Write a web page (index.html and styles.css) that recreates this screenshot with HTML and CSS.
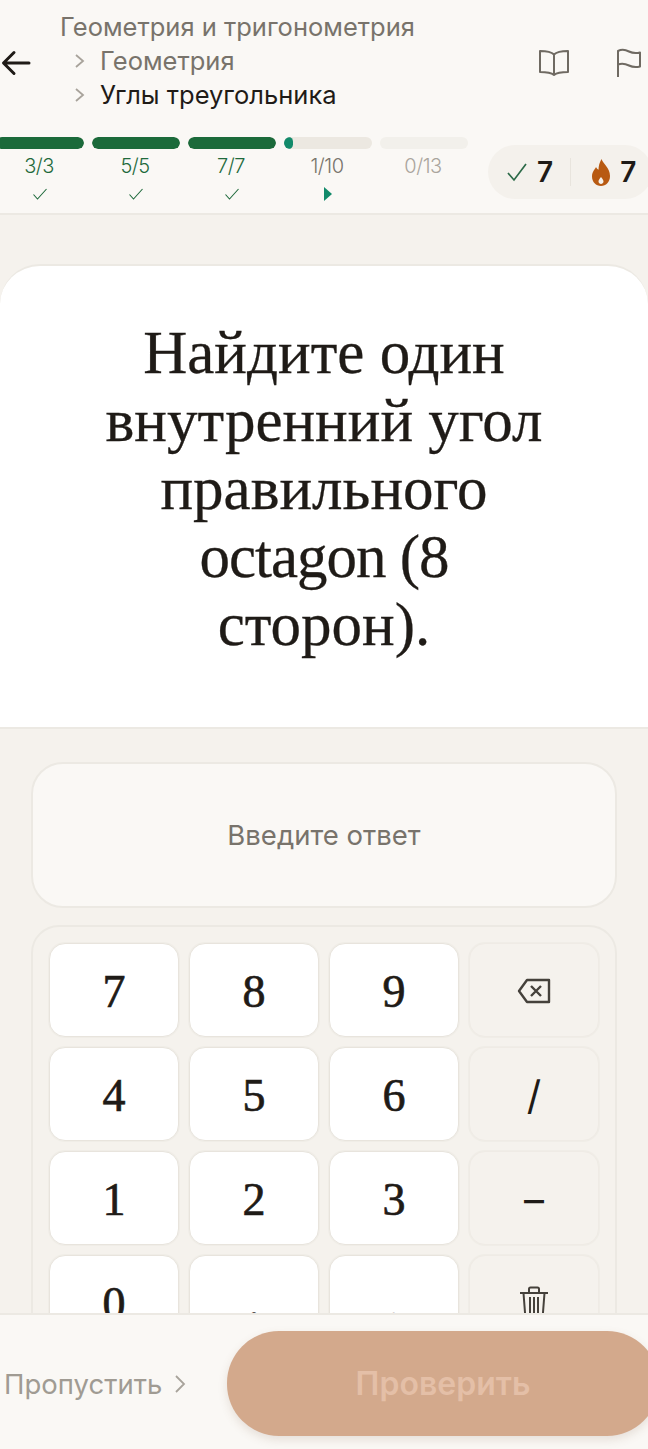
FILE: index.html
```html
<!DOCTYPE html>
<html lang="ru">
<head>
    <meta charset="UTF-8">
    <title>Углы треугольника</title>
    <link rel="stylesheet" href="styles.css">
</head>
<body>
    <div class="screen">
        <header class="top">
            <div class="crumbs-row">
                <svg class="back" viewBox="0 0 30 26" width="30" height="26"><path d="M28 13H3M13 2.500L2.500 13 13 23.500" fill="none" stroke="#1f1b17" stroke-width="3" stroke-linecap="round" stroke-linejoin="round"/></svg>
                <div class="crumbs">
                    <div class="crumb-top">Геометрия и тригонометрия</div>
                    <div class="crumb"><span class="chev"><svg viewBox="0 0 12 16" width="12" height="16"><path d="M2 2l7 6-7 6" fill="none" stroke="#a8a39b" stroke-width="1.800"/></svg></span>Геометрия</div>
                    <div class="crumb current"><span class="chev"><svg viewBox="0 0 12 16" width="12" height="16"><path d="M2 2l7 6-7 6" fill="none" stroke="#a8a39b" stroke-width="1.800"/></svg></span>Углы треугольника</div>
                </div>
                <svg class="book" viewBox="0 0 32 28" width="32" height="28"><path d="M16 5.500C13 2.500 8 2 2 2v21c6 0 11 .5 14 3 3-2.500 8-3 14-3V2c-6 0-11 .5-14 3.500zM16 5.500V26" fill="none" stroke="#6f6a62" stroke-width="2" stroke-linejoin="round"/></svg>
                <svg class="flag" viewBox="0 0 26 30" width="26" height="30"><path d="M2 29V3c4-2 8-1 11 .5s7 2 11 1v14c-4 1-8 .5-11-1s-7-2.500-11-1" fill="none" stroke="#6f6a62" stroke-width="2" stroke-linejoin="round"/></svg>
            </div>
            <div class="progress-row">
                <div class="levels">
                    <div class="level first">
                        <div class="bar"><div class="fill" style="width:100%"></div></div>
                        <div class="count">3/3</div>
                        <svg class="tick" viewBox="0 0 16 14" width="16" height="14"><path d="M1.500 7.500l4 4.500L14.500 2" fill="none" stroke="#1f6a3c" stroke-width="1.100"/></svg>
                    </div>
                    <div class="level">
                        <div class="bar"><div class="fill" style="width:100%"></div></div>
                        <div class="count">5/5</div>
                        <svg class="tick" viewBox="0 0 16 14" width="16" height="14"><path d="M1.500 7.500l4 4.500L14.500 2" fill="none" stroke="#1f6a3c" stroke-width="1.100"/></svg>
                    </div>
                    <div class="level">
                        <div class="bar"><div class="fill" style="width:100%"></div></div>
                        <div class="count">7/7</div>
                        <svg class="tick" viewBox="0 0 16 14" width="16" height="14"><path d="M1.500 7.500l4 4.500L14.500 2" fill="none" stroke="#1f6a3c" stroke-width="1.100"/></svg>
                    </div>
                    <div class="level active">
                        <div class="bar"><div class="fill" style="width:10%"></div></div>
                        <div class="count">1/10</div>
                        <svg class="tick" viewBox="0 0 16 14" width="16" height="14"><path d="M4 0l8 7-8 7z" fill="#128a6a"/></svg>
                    </div>
                    <div class="level todo">
                        <div class="bar"></div>
                        <div class="count">0/13</div>
                    </div>
                </div>
                <div class="stats">
                    <svg viewBox="0 0 22 20" width="22" height="20"><path d="M2 11l6 7L20 2" fill="none" stroke="#2c6a48" stroke-width="1.700"/></svg>
                    <span class="stat-num">7</span>
                    <span class="stat-sep"></span>
                    <svg viewBox="0 0 20 27" width="20" height="27"><path fill-rule="evenodd" d="M10.500 0c1.500 5 8.500 8.500 8.500 17 0 6-4 10-9 10s-9-4-9-9.500c0-5 3-7 4-9.500.8 1.500 1.500 2.300 2.500 2.800C7.500 7 8.500 3.500 10.500 0zM10 18c-1.500 2-2.500 3-2.500 4.500S8.800 25 10 25s2.500-1 2.500-2.500S11.500 20 10 18z" fill="#b85a12"/></svg>
                    <span class="stat-num">7</span>
                </div>
            </div>
        </header>

        <main class="body">
            <section class="question">
                <h1>Найдите один внутренний угол правильного <span class="latin">octagon (8</span> сторон).</h1>
            </section>
            <section class="answer">
                <div class="answer-box">Введите ответ</div>
                <div class="keypad">
                    <button class="key">7</button>
                    <button class="key">8</button>
                    <button class="key">9</button>
                    <button class="key alt">
                        <svg viewBox="0 0 34 26" width="34" height="26"><path d="M10 2h22v22H10L2 13zM14 8l10 10M24 8L14 18" fill="none" stroke="#45413b" stroke-width="2.400" stroke-linejoin="round"/></svg>
                    </button>
                    <button class="key">4</button>
                    <button class="key">5</button>
                    <button class="key">6</button>
                    <button class="key alt"><span class="slash">/</span></button>
                    <button class="key">1</button>
                    <button class="key">2</button>
                    <button class="key">3</button>
                    <button class="key alt"><span class="minus">&ndash;</span></button>
                    <button class="key">0</button>
                    <button class="key"><span class="punct">.</span></button>
                    <button class="key"><span class="punct">,</span></button>
                    <button class="key alt">
                        <svg viewBox="0 0 30 34" width="30" height="34"><path d="M1 7h28M10 7V3q0-1.500 1.500-1.500h7Q20 1.500 20 3v4M4.500 7l2 26h17l2-26M11 11v20M15 11v20M19 11v20" fill="none" stroke="#45413b" stroke-width="2"/></svg>
                    </button>
                </div>
            </section>
        </main>

        <footer class="bottom">
            <div class="skip">Пропустить <svg viewBox="0 0 12 20" width="12" height="20"><path d="M2 2l8 8-8 8" fill="none" stroke="#a8a39b" stroke-width="1.800"/></svg></div>
            <button class="check">Проверить</button>
        </footer>
    </div>
</body>
</html>
```

FILE: styles.css
```css
* {
    box-sizing: border-box;
}
html, body {
    margin: 0;
    padding: 0;
}
body {
    font-family: Inter, "Noto Sans", sans-serif;
    background-color: #f5f2ed;
}
.screen {
    width: 648px;
    height: 1449px;
    display: flex;
    flex-direction: column;
    overflow: hidden;
}
.top {
    height: 215px;
    background-color: #faf8f5;
    border-bottom: 2px solid #ece9e3;
    flex-shrink: 0;
}
.crumbs-row {
    height: 125px;
    display: flex;
    align-items: center;
}
.back {
    margin-left: 1px;
    flex-shrink: 0;
}
.crumbs {
    margin-left: 29px;
    margin-bottom: 4px;
    width: 478px;
    font-size: 25.5px;
    line-height: 34px;
    color: #78736b;
}
.crumb {
    display: flex;
    align-items: center;
    margin-left: 14px;
}
.crumb.current {
    color: #1f1b17;
}
.chev {
    width: 26px;
    display: flex;
}
.book {
    flex-shrink: 0;
}
.flag {
    margin-left: 46px;
    flex-shrink: 0;
}
.progress-row {
    display: flex;
    justify-content: space-between;
    padding-top: 12px;
}
.levels {
    display: flex;
    gap: 8px;
    margin-left: -4px;
}
.level {
    width: 88px;
    display: flex;
    flex-direction: column;
    align-items: center;
    color: #1f6a3c;
}
.bar {
    width: 100%;
    height: 12px;
    border-radius: 6px;
    background-color: #ece8e1;
    overflow: hidden;
}
.fill {
    height: 100%;
    border-radius: 6px;
    background-color: #1b6a3a;
}
.active .fill {
    background-color: #128a6a;
}
.active {
    color: #78736b;
}
.todo .bar {
    background-color: #f2f0eb;
}
.todo {
    color: #aaa59d;
}
.count {
    font-size: 20px;
    font-weight: 300;
    line-height: 24px;
    margin-top: 5px;
    margin-right: 2px;
    letter-spacing: -0.5px;
}
.tick {
    margin-top: 9px;
}
.stats {
    width: 164px;
    height: 54px;
    margin-top: 8px;
    margin-right: -4px;
    padding-left: 18px;
    border-radius: 27px;
    background-color: #f4f1ec;
    display: flex;
    align-items: center;
}
.stat-num {
    font-size: 28px;
    font-weight: 600;
    color: #1f1b17;
    margin-left: 9px;
}
.stat-sep {
    width: 1px;
    height: 28px;
    background-color: #e8e4dd;
    margin: 0 20px 0 17px;
}
.body {
    flex: 1;
    min-height: 0;
    overflow: hidden;
    display: flex;
    flex-direction: column;
    padding-top: 49px;
}
.question {
    height: 465px;
    background-color: #fff;
    border-top: 2px solid #ece9e3;
    border-bottom: 2px solid #ece9e3;
    border-radius: 40px 40px 0 0;
    padding: 53px 90px 0;
    flex-shrink: 0;
}
h1 {
    margin: 0;
    font-family: "Liberation Serif", serif;
    font-weight: 400;
    font-size: 61px;
    line-height: 68px;
    text-align: center;
    color: #1f1b17;
    -webkit-text-stroke: 0.3px #1f1b17;
}
.latin {
    letter-spacing: -1px;
}
.answer {
    padding: 33px 31px 0;
}
.answer-box {
    height: 146px;
    display: flex;
    align-items: center;
    justify-content: center;
    background-color: #faf8f5;
    border: 2px solid #ece9e3;
    border-radius: 32px;
    font-size: 27.5px;
    color: #78736b;
}
.keypad {
    margin-top: 17px;
    padding: 16px;
    border: 2px solid #ece9e3;
    border-radius: 28px;
    display: grid;
    grid-template-columns: repeat(4, 1fr);
    grid-auto-rows: 94px;
    gap: 10px;
}
.key {
    border: 1px solid #e8e4dd;
    box-shadow: 0 0 0 1px #f0ede7;
    border-radius: 16px;
    background-color: #fff;
    font-family: "Liberation Serif", serif;
    font-size: 46px;
    color: #1f1b17;
    -webkit-text-stroke: 0.7px #1f1b17;
    padding: 2px 0 0;
    display: flex;
    align-items: center;
    justify-content: center;
}
.key.alt {
    background-color: #f5f2ed;
    border-color: #efebe5;
    -webkit-text-stroke: 0;
}
.punct {
    margin-bottom: 2px;
}
.slash {
    font-family: Inter, sans-serif;
    font-size: 40px;
}
.minus {
    font-family: Inter, sans-serif;
    font-size: 40px;
}
.bottom {
    height: 136px;
    flex-shrink: 0;
    background-color: #faf8f5;
    border-top: 2px solid #ece9e3;
    display: flex;
    align-items: flex-start;
    padding: 16px 0 0 4px;
}
.skip {
    width: 223px;
    height: 105px;
    flex-shrink: 0;
    display: flex;
    align-items: center;
    gap: 12px;
    font-size: 27.5px;
    color: #a09b93;
}
.check {
    width: 432px;
    height: 105px;
    flex-shrink: 0;
    border: none;
    border-radius: 52px;
    background-color: #d3a98c;
    box-shadow: 0 4px 10px rgba(120, 90, 60, 0.15);
    font-family: Inter, sans-serif;
    font-size: 32px;
    font-weight: 600;
    color: #e4bfa7;
    padding: 0;
}
```
